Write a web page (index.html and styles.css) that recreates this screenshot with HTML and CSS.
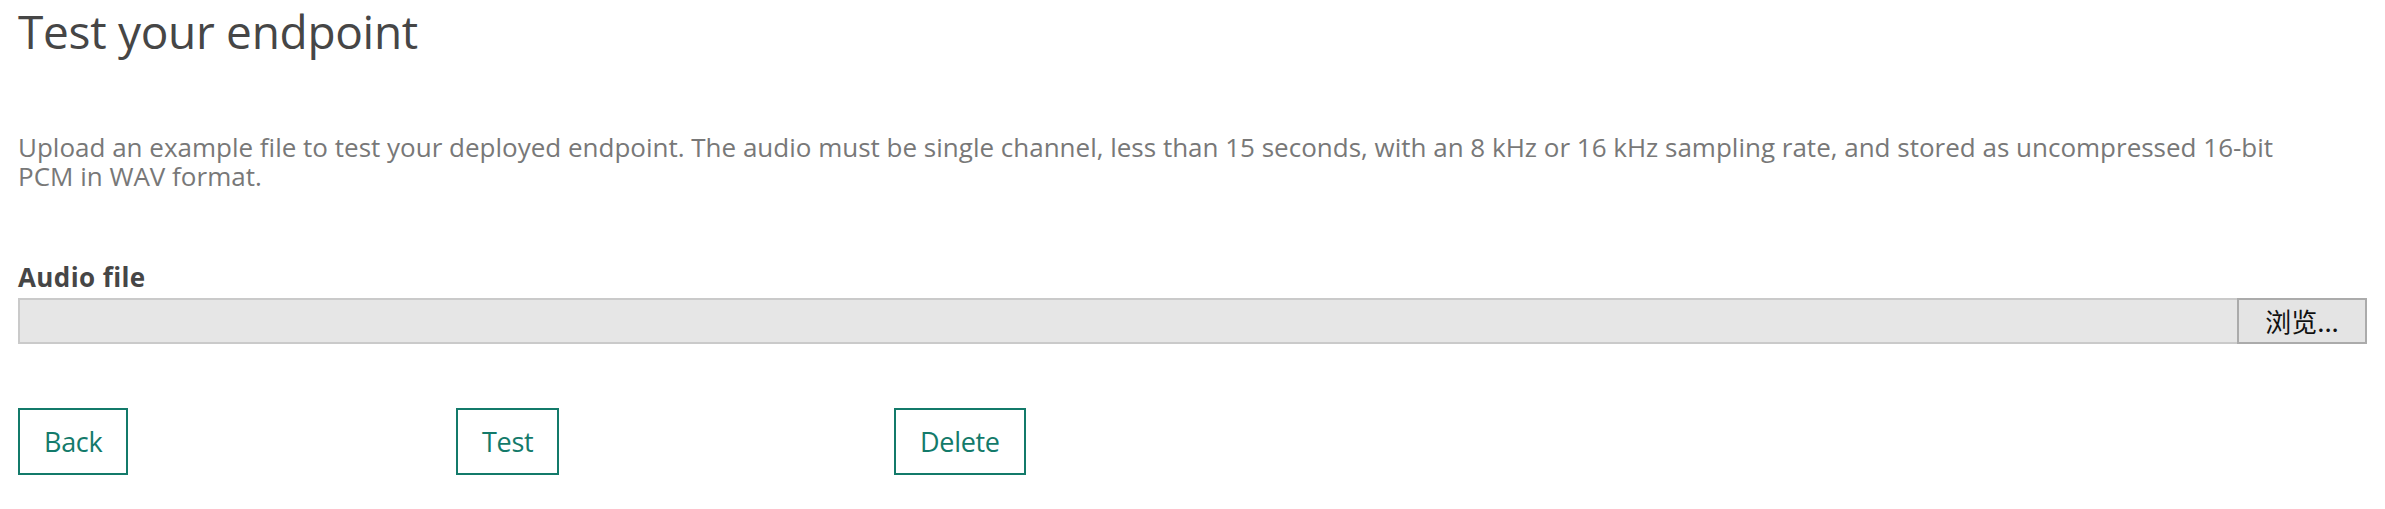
FILE: index.html
```html
<!DOCTYPE html>
<html lang="en">
<head>
<meta charset="utf-8">
<title>Test your endpoint</title>
<link rel="stylesheet" href="styles.css">
</head>
<body>
<main class="page">
  <h1 class="title">Test your endpoint</h1>
  <p class="intro">Upload an example file to test your deployed endpoint. The audio must be single channel, less than 15 seconds, with an 8 kHz or 16 kHz sampling rate, and stored as uncompressed 16-bit PCM in WAV format.</p>
  <label class="field-label" for="audio">Audio file</label>
  <div class="file-input">
    <div class="file-path" id="audio"></div>
    <button class="browse" type="button">浏览...</button>
  </div>
  <div class="actions">
    <button class="btn" type="button">Back</button>
    <button class="btn" type="button">Test</button>
    <button class="btn" type="button">Delete</button>
  </div>
</main>
</body>
</html>
```

FILE: styles.css
```css
html, body {
  margin: 0;
  padding: 0;
  background: #ffffff;
}

body {
  font-family: "Open Sans", "Noto Sans", "Liberation Sans", sans-serif;
}

.page {
  padding: 0 18px;
  display: flex;
  flex-direction: column;
  align-items: stretch;
}

.title {
  margin: 0;
  font-size: 46px;
  font-weight: 400;
  line-height: 63px;
  color: #464646;
  letter-spacing: -0.3px;
}

.intro {
  margin: 70px 0 0;
  max-width: 2300px;
  font-size: 26px;
  line-height: 29px;
  color: #787878;
  letter-spacing: 0;
}

.field-label {
  margin-top: 72px;
  font-size: 26px;
  font-weight: 700;
  line-height: 28px;
  color: #464646;
  letter-spacing: 0.4px;
}

.file-input {
  margin-top: 7px;
  display: flex;
  height: 46px;
}

.file-path {
  flex: 1;
  background: #e6e6e6;
  border: 2px solid #cacaca;
  border-right: none;
}

.browse {
  width: 130px;
  margin: 0;
  padding: 0;
  background: #e4e4e4;
  border: 2px solid #ababab;
  font-family: "Noto Sans CJK SC", "Noto Sans", sans-serif;
  font-size: 26px;
  line-height: 30px;
  color: #111111;
}

.actions {
  margin-top: 64px;
  display: grid;
  grid-template-columns: 438px 438px auto;
  justify-items: start;
}

.btn {
  box-sizing: border-box;
  height: 67px;
  padding: 0 24px;
  background: #ffffff;
  border: 2px solid #137a6a;
  color: #137a6a;
  font-family: "Open Sans", "Noto Sans", sans-serif;
  font-size: 27px;
  line-height: 63px;
  letter-spacing: -0.3px;
}
```
